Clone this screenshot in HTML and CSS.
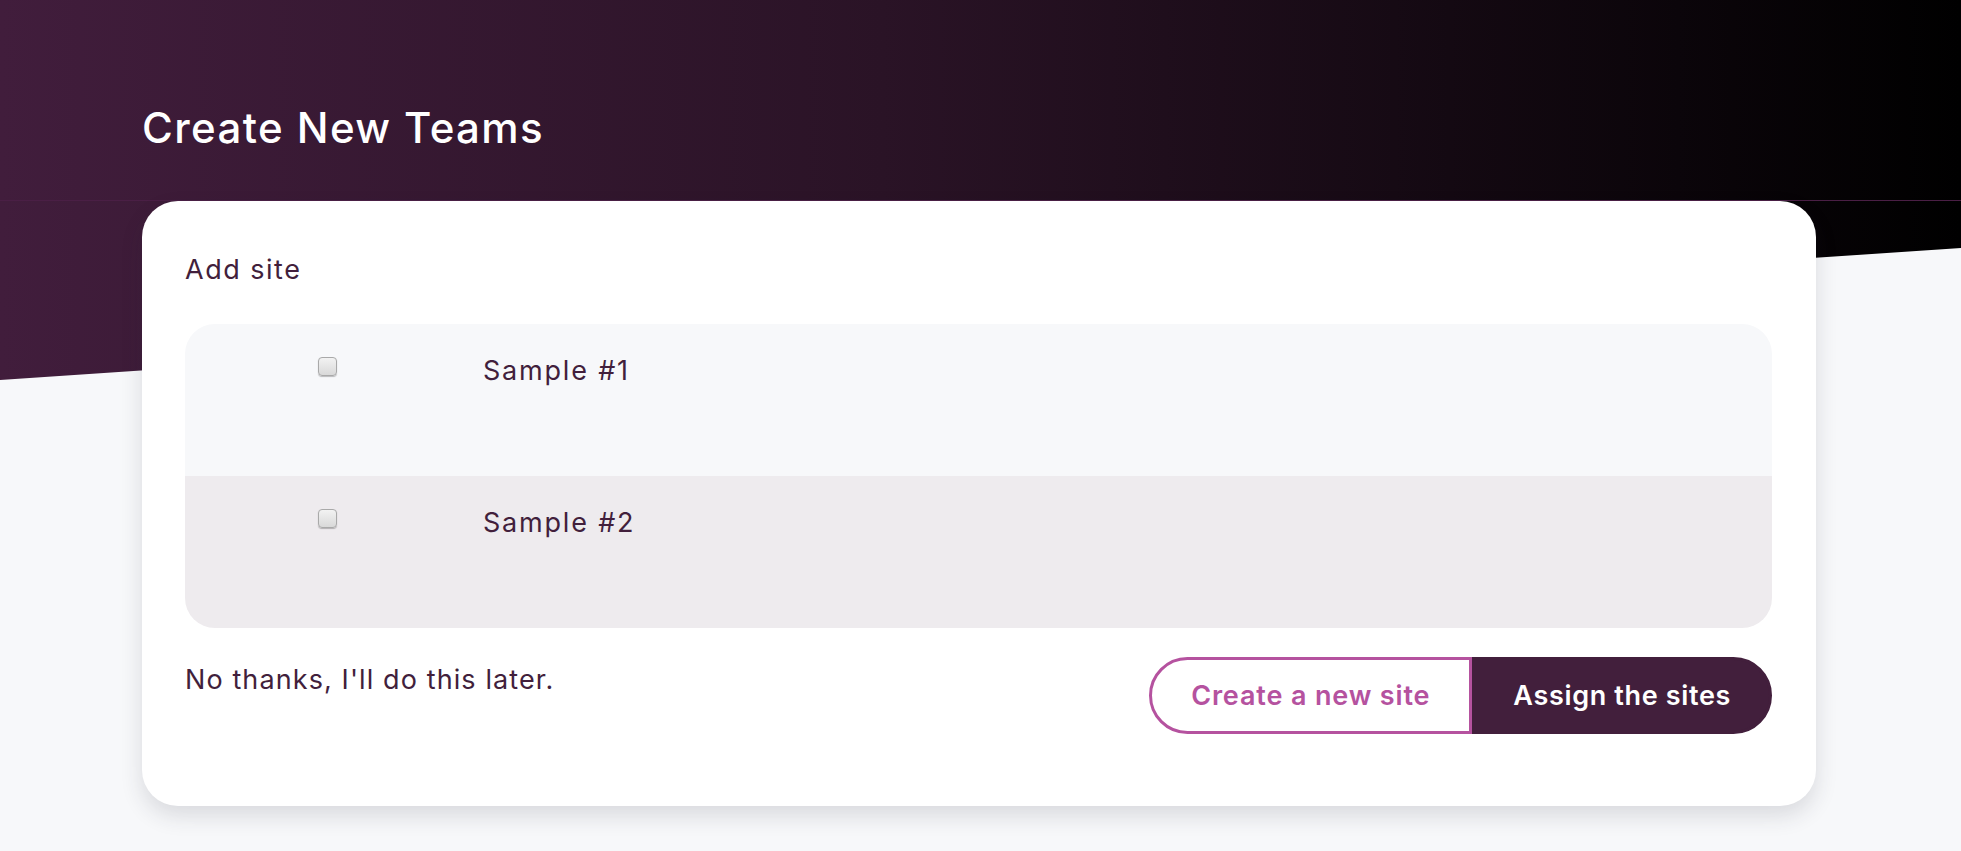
FILE: index.html
```html
<!DOCTYPE html>
<html lang="en">
<head>
<meta charset="utf-8">
<title>Create New Teams</title>
<link rel="stylesheet" href="styles.css">
</head>
<body>
<div class="page">
  <div class="hero-bg"></div>
  <main class="container">
    <h1 class="title">Create New Teams</h1>
    <section class="card">
      <p class="label">Add site</p>
      <div class="site-list">
        <label class="site-row">
          <span class="check-cell"><input type="checkbox" class="check"></span>
          <span class="site-name">Sample #1</span>
        </label>
        <label class="site-row alt">
          <span class="check-cell"><input type="checkbox" class="check"></span>
          <span class="site-name">Sample #2</span>
        </label>
      </div>
      <div class="card-footer">
        <a class="later">No thanks, I'll do this later.</a>
        <div class="btn-group">
          <button class="btn btn-outline">Create a new site</button>
          <button class="btn btn-solid">Assign the sites</button>
        </div>
      </div>
    </section>
  </main>
</div>
</body>
</html>
```

FILE: styles.css
```css
* { box-sizing: border-box; }
html, body { margin: 0; padding: 0; }
body {
  background: #f7f8fa;
  font-family: "Inter", "Open Sans", sans-serif;
  color: #421f3c;
  width: 1961px;
  height: 851px;
  overflow: hidden;
}
.page { position: relative; min-height: 851px; }
.hero-bg {
  position: absolute;
  left: 0; top: 0; right: 0;
  height: 380px;
  background: linear-gradient(90deg, #411d3c 0%, #2a1326 45%, #000 100%);
  clip-path: polygon(0 0, 100% 0, 100% 248px, 0 380px);
  z-index: 0;
}
.hero-bg::after {
  content: "";
  position: absolute;
  left: 0; right: 0; top: 200px;
  height: 1px;
  background: #4a1f45;
}
.container {
  position: relative;
  z-index: 1;
  width: 1674px;
  margin: 0 0 0 142px;
  padding-top: 99px;
}
.title {
  margin: 0 0 44px;
  font-size: 42px;
  line-height: 58px;
  font-weight: 500;
  color: #fff;
  letter-spacing: 1.4px;
}
.card {
  background: #fff;
  border-radius: 36px;
  padding: 48px 44px 72px 43px;
  box-shadow: 0 10px 22px rgba(40, 40, 60, 0.14);
}
.label {
  margin: 0 0 33px;
  font-size: 27px;
  line-height: 42px;
  letter-spacing: 1.5px;
}
.site-list {
  border-radius: 30px;
  overflow: hidden;
}
.site-row {
  display: grid;
  grid-template-columns: 298px 1fr;
  align-items: start;
  height: 152px;
  padding-top: 26px;
  background: #f7f8fa;
}
.site-row.alt { background: #eeebee; }
.check-cell { padding-left: 133px; padding-top: 7px; display: flex; }
.check {
  appearance: none;
  -webkit-appearance: none;
  margin: 0;
  width: 19px;
  height: 19px;
  border: 1px solid #a9a9a9;
  border-radius: 4px;
  background: linear-gradient(#f2f2f2, #d9d9d9);
  box-shadow: 0 1px 1px rgba(0, 0, 0, 0.25);
}
.site-name {
  font-size: 27px;
  line-height: 42px;
  letter-spacing: 1.8px;
}
.card-footer {
  display: flex;
  justify-content: space-between;
  align-items: flex-start;
  margin-top: 29px;
}
.later {
  margin-top: 2px;
  font-size: 27px;
  line-height: 42px;
  letter-spacing: 1.1px;
  cursor: pointer;
}
.btn-group { display: flex; }
.btn {
  font-family: inherit;
  font-size: 27px;
  font-weight: 600;
  height: 77px;
  border: 3px solid #b5529f;
  cursor: pointer;
}
.btn-outline {
  padding: 0 39px;
  background: #fff;
  color: #b5529f;
  letter-spacing: 0.85px;
  border-radius: 40px 0 0 40px;
}
.btn-solid {
  padding: 0 38px;
  background: #421f3c;
  border-color: #421f3c;
  color: #fff;
  letter-spacing: 0.65px;
  border-radius: 0 40px 40px 0;
}
```
